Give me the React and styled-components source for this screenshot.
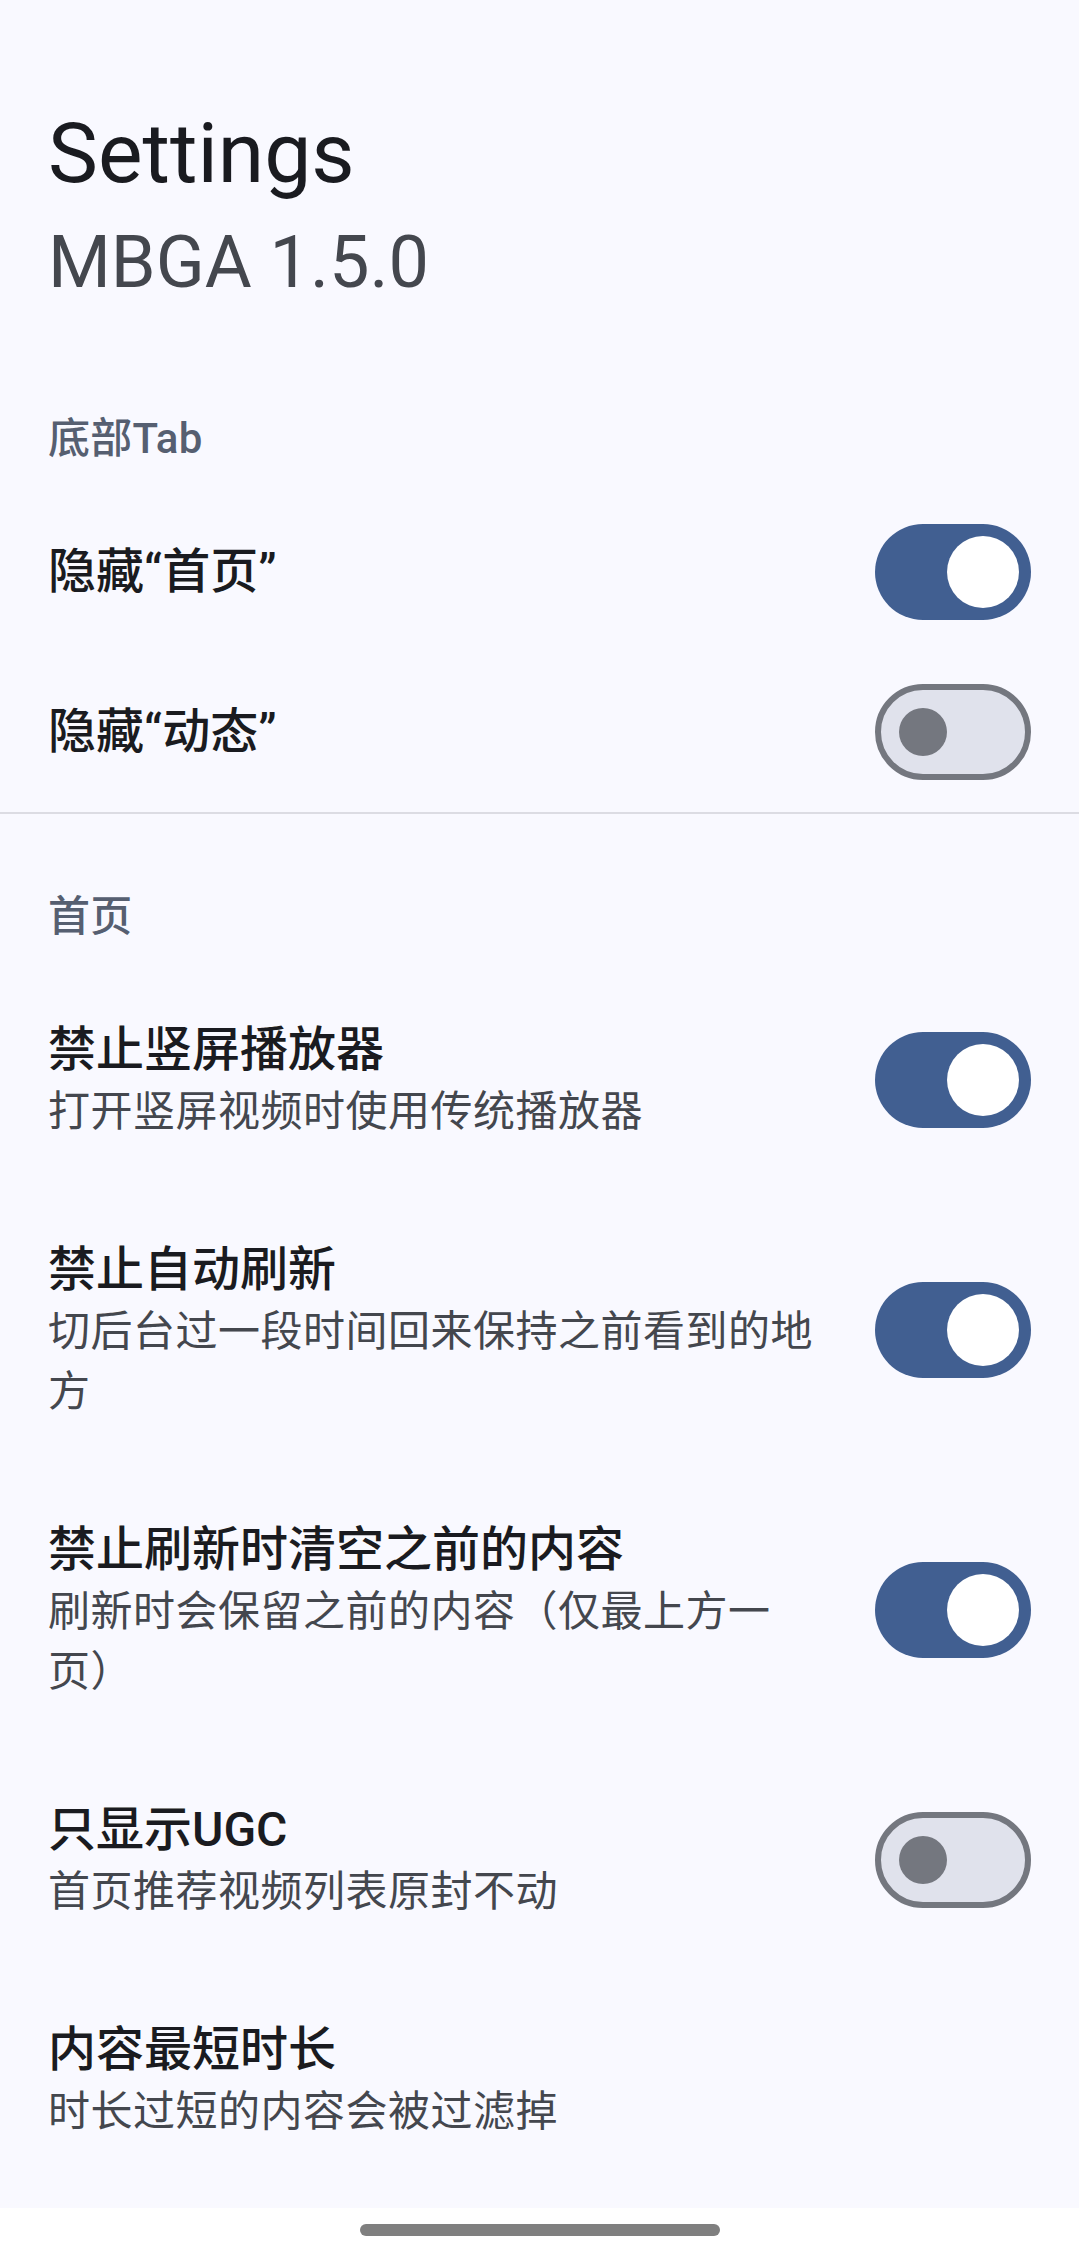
import React from 'react';
import styled, { createGlobalStyle } from 'styled-components';

const sections = [
  {
    label: '底部Tab',
    items: [
      { title: '隐藏“首页”', on: true },
      { title: '隐藏“动态”', on: false },
    ],
  },
  {
    label: '首页',
    items: [
      { title: '禁止竖屏播放器', desc: '打开竖屏视频时使用传统播放器', on: true },
      {
        title: '禁止自动刷新',
        desc: '切后台过一段时间回来保持之前看到的地方',
        on: true,
      },
      {
        title: '禁止刷新时清空之前的内容',
        desc: '刷新时会保留之前的内容（仅最上方一页）',
        on: true,
      },
      { title: '只显示UGC', desc: '首页推荐视频列表原封不动', on: false },
      { title: '内容最短时长', desc: '时长过短的内容会被过滤掉' },
    ],
  },
];

function Switch({ on }) {
  return (
    <Track $on={on}>
      <Thumb $on={on} />
    </Track>
  );
}

function SettingRow({ item }) {
  return (
    <Row>
      <TextBox>
        <Title>{item.title}</Title>
        {item.desc && <Desc>{item.desc}</Desc>}
      </TextBox>
      {item.on !== undefined && <Switch on={item.on} />}
    </Row>
  );
}

export default function App() {
  return (
    <>
      <GlobalStyle />
      <Screen>
        <Content>
          <Header>
            <h1 className="title">Settings</h1>
            <div className="version">MBGA 1.5.0</div>
          </Header>
          {sections.map((section, i) => (
            <Section key={section.label} $divider={i < sections.length - 1}>
              <SectionLabel>{section.label}</SectionLabel>
              {section.items.map((item) => (
                <SettingRow key={item.title} item={item} />
              ))}
            </Section>
          ))}
        </Content>
        <NavBar>
          <div className="handle" />
        </NavBar>
      </Screen>
    </>
  );
}

const GlobalStyle = createGlobalStyle`
  html, body {
    margin: 0;
    padding: 0;
    background: #f9f9ff;
  }
  body {
    font-family: Roboto, 'Noto Sans CJK SC', sans-serif;
    -webkit-font-smoothing: antialiased;
  }
`;

const Screen = styled.div`
  display: flex;
  flex-direction: column;
  width: 1079px;
  height: 2257px;
  overflow: hidden;
`;

const Content = styled.div`
  flex: 1;
  overflow: hidden;
  background: #f9f9ff;
`;

const Header = styled.div`
  padding: 100px 48px 25px;
  .title {
    margin: 0;
    font-size: 84px;
    line-height: 108px;
    font-weight: 400;
    color: #1a1b20;
  }
  .version {
    margin-top: 7px;
    font-size: 72px;
    line-height: 96px;
    color: #44474e;
  }
`;

const Section = styled.section`
  border-bottom: ${(p) => (p.$divider ? '2px solid #dcdce3' : 'none')};
`;

const SectionLabel = styled.div`
  padding: 73px 48px 23px;
  font-size: 42px;
  line-height: 60px;
  font-weight: 500;
  letter-spacing: 0.3px;
  color: #565f71;
`;

const Row = styled.div`
  display: flex;
  align-items: center;
  gap: 48px;
  padding: 0 48px;
`;

const TextBox = styled.div`
  flex: 1;
  min-width: 0;
  padding: 48px 0;
`;

const Title = styled.div`
  font-size: 48px;
  line-height: 64px;
  font-weight: 500;
  color: #1a1b20;
`;

const Desc = styled.div`
  font-size: 42px;
  line-height: 60px;
  letter-spacing: 0.5px;
  color: #44474e;
`;

const Track = styled.div`
  flex-shrink: 0;
  box-sizing: border-box;
  width: 156px;
  height: 96px;
  border-radius: 48px;
  display: flex;
  align-items: center;
  justify-content: ${(p) => (p.$on ? 'flex-end' : 'flex-start')};
  padding: ${(p) => (p.$on ? '0 12px' : '0 0 0 18px')};
  background: ${(p) => (p.$on ? '#415f91' : '#e0e2ec')};
  border: ${(p) => (p.$on ? 'none' : '6px solid #74777f')};
`;

const Thumb = styled.div`
  width: ${(p) => (p.$on ? '72px' : '48px')};
  height: ${(p) => (p.$on ? '72px' : '48px')};
  border-radius: 50%;
  background: ${(p) => (p.$on ? '#ffffff' : '#74777f')};
`;

const NavBar = styled.div`
  height: 49px;
  flex-shrink: 0;
  background: #ffffff;
  display: flex;
  justify-content: center;
  padding-top: 16px;
  box-sizing: border-box;
  .handle {
    width: 360px;
    height: 12px;
    border-radius: 6px;
    background: #7f7f7f;
  }
`;
